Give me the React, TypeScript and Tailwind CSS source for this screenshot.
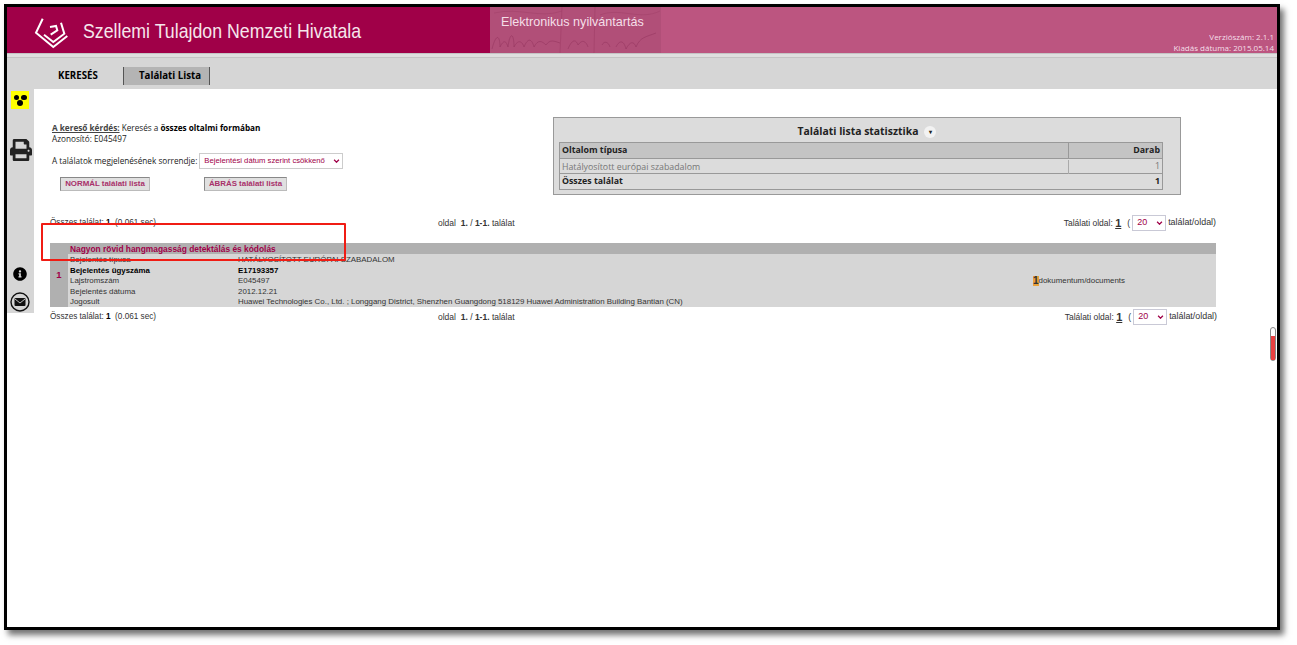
import { FaInfoCircle, FaPrint } from "react-icons/fa";

const sans = "font-['Liberation_Sans',Arial,sans-serif]";
const human = "font-['Open_Sans',sans-serif]";

const fields = [
  { label: "Bejelentés típusa", value: "HATÁLYOSÍTOTT EURÓPAI SZABADALOM" },
  { label: "Bejelentés ügyszáma", value: "E17193357", bold: true },
  { label: "Lajstromszám", value: "E045497" },
  { label: "Bejelentés dátuma", value: "2012.12.21" },
  {
    label: "Jogosult",
    value:
      "Huawei Technologies Co., Ltd. ; Longgang District, Shenzhen Guangdong 518129 Huawei Administration Building Bantian (CN)",
  },
];

function Logo() {
  return (
    <svg viewBox="0 0 34 36" className="h-[36px] w-[34px] overflow-visible" fill="none" stroke="#fff" strokeWidth="2">
      <path d="M7.7 6.7 L1 20.7 L18.3 35 L32.3 24" />
      <path d="M26 10.7 L29.3 21.7 L18.3 30 L9 22.7" />
      <path d="M15 15 L21 14 L22.3 18.3 L15.7 22.7" />
    </svg>
  );
}

function Handwriting() {
  return (
    <svg viewBox="0 0 171 46" className="h-full w-full" fill="none" stroke="#8f2f58" strokeOpacity="0.5">
      <path d="M2 42 C6 26 10 28 10 40 C14 32 16 34 18 40 C20 24 24 26 24 40 C28 32 32 34 34 40 C38 30 42 32 44 40 C48 32 52 34 56 38 C60 32 64 34 70 36" strokeWidth="0.9" />
      <path d="M78 42 C82 32 86 32 88 38 C92 32 96 34 98 40 M112 38 C114 34 118 34 120 40 M126 40 C130 32 134 34 136 42 C140 34 144 34 146 40 C150 30 156 30 166 26" strokeWidth="0.9" />
      <path d="M72 0 L70 46 M105 0 L104 46" strokeWidth="0.6" />
      <path d="M4 6 C30 0 50 12 72 4 M110 8 C130 0 150 14 170 4" strokeWidth="0.5" />
    </svg>
  );
}

function Chevron() {
  return (
    <svg viewBox="0 0 8 5" className="pointer-events-none absolute right-[3px] top-[6px] h-[4px] w-[7px]" fill="none" stroke="#a00048" strokeWidth="1.6">
      <path d="M1 1 L4 4 L7 1" />
    </svg>
  );
}

function Summary({ pager, offset }: Readonly<{ pager: string; offset: string }>) {
  return (
    <div className={`${pager} flex items-center text-[8.5px] text-[#333] ${sans}`}>
      <span className="w-[388px] text-[8.2px]">
        Összes találat: <b className="text-black">1</b>&nbsp;&nbsp;(0.061 sec)
      </span>
      <span className="flex-1">
        oldal&nbsp;&nbsp;<b>1.</b> / <b>1-1.</b> találat
      </span>
      <span className={`flex items-center ${offset}`}>
        Találati oldal:&nbsp;<b className="text-[11px] underline">1</b>
        <span className="ml-[6px]">(</span>
        <span className="relative mx-[2px] h-[16px] w-[34px]">
          <select className="h-full w-full appearance-none border border-[#c9c9d6] bg-white pl-[4px] text-[9px] text-[#a00048]">
            <option>20</option>
          </select>
          <Chevron />
        </span>
        <span className="text-[8.9px]">találat/oldal)</span>
      </span>
    </div>
  );
}

export default function App() {
  return (
    <div className="h-[645px] w-[1297px] bg-white pl-[4px] pt-[4px]">
      <div className="relative h-[626px] w-[1276px] overflow-hidden border-[3px] border-black shadow-[4px_5px_6px_rgba(0,0,0,0.55)]">
        <header className="flex h-[46px] bg-[#a00048] text-white">
          <div className={`flex w-[483px] items-center pl-[28px] ${sans}`}>
            <Logo />
            <span className="ml-[14px] origin-left scale-x-[0.845] whitespace-nowrap text-[21px] leading-none text-[#f6e6ec]">
              Szellemi Tulajdon Nemzeti Hivatala
            </span>
          </div>
          <div className="relative w-[171px] bg-[#b14f78]">
            <Handwriting />
            <span className={`absolute left-[11px] top-[9px] text-[12.6px] leading-none text-[#f5dfe8] ${sans}`}>
              Elektronikus nyilvántartás
            </span>
          </div>
          <div className={`flex flex-1 flex-col items-end justify-end bg-[#bc5580] pr-[3px] text-right text-[8px] leading-[11px] text-[#f5dfe8] ${human}`}>
            <span>Verziószám: 2.1.1</span>
            <span>Kiadás dátuma: 2015.05.14</span>
          </div>
        </header>

        <div className="h-[5px] border-y border-[#c4c4c4] bg-[#dfdfdf]" />

        <nav className={`flex h-[31px] items-end bg-[#d6d6d6] pl-[51px] pb-[4px] text-[9.7px] font-bold text-black ${human}`}>
          <span className="flex h-[18px] w-[65px] items-center">KERESÉS</span>
          <span className="flex h-[18px] w-[87px] items-center border-x border-[#555] bg-[#b4b4b4] pl-[15px]">
            Találati Lista
          </span>
        </nav>

        <div className="flex">
          <aside className="flex h-[224px] w-[27px] flex-col items-center bg-[#d6d6d6] pr-[1px]">
            <div className="mt-[2px] flex h-[18px] w-[18px] flex-col items-center justify-center bg-[#ffff00]">
              <div className="flex gap-[2px]">
                <span className="h-[5.5px] w-[5.5px] rounded-full bg-black" />
                <span className="h-[5.5px] w-[5.5px] rounded-full bg-black" />
              </div>
              <span className="h-[5.5px] w-[5.5px] rounded-full bg-black" />
            </div>
            <FaPrint className="ml-[2px] mt-[29px] h-[24px] w-[22px] text-[#222]" />
            <FaInfoCircle className="mt-[105px] h-[14px] w-[14px] text-black" />
            <svg viewBox="0 0 20 20" className="mt-[11px] h-[20px] w-[20px]">
              <circle cx="10" cy="10" r="9" fill="none" stroke="#111" strokeWidth="1.4" />
              <rect x="4.5" y="6" width="11" height="8" rx="1" fill="#111" />
              <path d="M5 7 L10 11 L15 7" fill="none" stroke="#d6d6d6" strokeWidth="0.9" />
            </svg>
          </aside>

          <main className="flex-1 pl-[16px] pr-[61px]">
            <div className="flex h-[106px] items-start">
              <div className={`w-[503px] pt-[33px] text-[8.2px] text-[#222] ${human}`}>
                <div className="ml-[2px] leading-[12px]">
                  <b className="text-[#444] underline">A kereső kérdés:</b> Keresés a <b className="text-black">összes oltalmi formában</b>
                </div>
                <div className="ml-[2px] leading-[10px]">Azonosító: E045497</div>
                <div className="ml-[2px] mt-[9px] flex items-center">
                  A találatok megjelenésének sorrendje:
                  <span className="relative ml-[2px] h-[16px] w-[144px]">
                    <select className={`h-full w-full appearance-none border border-[#ccc] bg-white pl-[4px] text-[7.7px] text-[#a00048] ${sans}`}>
                      <option>Bejelentési dátum szerint csökkenő</option>
                    </select>
                    <Chevron />
                  </span>
                </div>
                <div className={`ml-[10px] mt-[8px] flex text-[7.9px] font-bold text-[#a8306a] ${sans}`}>
                  <button className="h-[14px] w-[90px] border border-[#bbb] border-t-[#888] border-l-[#888] bg-[#e0e0e0]">
                    NORMÁL találati lista
                  </button>
                  <button className="ml-[54px] h-[14px] w-[83px] border border-[#bbb] border-t-[#888] border-l-[#888] bg-[#e0e0e0]">
                    ÁBRÁS találati lista
                  </button>
                </div>
              </div>

              <section className={`mt-[28px] h-[78px] w-[628px] border border-[#999] bg-[#dcdcdc] px-[5px] ${human}`}>
                <h2 className="flex h-[24px] items-center justify-center gap-[6px] pt-[3px] text-[10.4px] font-bold text-[#222]">
                  Találati lista statisztika
                  <span className="flex h-[12px] w-[12px] items-center justify-center rounded-full bg-[#f2f2f2] text-[6px] leading-none text-[#222]">
                    ▾
                  </span>
                </h2>
                <div className="w-[604px] border border-[#999] text-[8.8px]">
                  <div className="flex h-[16px] items-center border-b border-[#999] bg-[#c4c4c4] font-bold text-[#222]">
                    <span className="w-[509px] border-r border-[#999] pl-[2px] leading-[15px]">Oltalom típusa</span>
                    <span className="flex-1 pr-[2px] text-right">Darab</span>
                  </div>
                  <div className="flex h-[15px] items-center border-b border-[#999] pt-[1px] text-[#777]">
                    <span className="w-[509px] border-r border-[#aaa] pl-[2px] leading-[14px]">Hatályosított európai szabadalom</span>
                    <span className="flex-1 pr-[2px] text-right">1</span>
                  </div>
                  <div className="flex h-[15px] items-center justify-between px-[2px] font-bold text-[#222]">
                    <span>Összes találat</span>
                    <span>1</span>
                  </div>
                </div>
              </section>
            </div>

            <Summary pager="mt-[20px] h-[16px]" offset="" />

            <div className={`mt-[12px] flex h-[64px] bg-[#d6d6d6] text-[7.9px] text-[#333] ${sans}`}>
              <div className="flex w-[18px] items-center justify-center bg-[#b0b0b0] text-[9.5px] font-bold text-[#a00048]">1</div>
              <div className="flex-1">
                <div className="h-[11px] bg-[#b0b0b0] pl-[2px] text-[8.4px] font-bold leading-[12px] text-[#a00048]">
                  Nagyon rövid hangmagasság detektálás és kódolás
                </div>
                <div className="flex">
                  <div className="w-[965px] pt-[1px]">
                    {fields.map((field) => (
                      <div key={field.label} className={`flex h-[10.5px] items-center pl-[2px] ${field.bold ? "font-bold text-black" : ""}`}>
                        <span className="w-[168px]">{field.label}</span>
                        <span className="whitespace-nowrap">{field.value}</span>
                      </div>
                    ))}
                  </div>
                  <div className="flex h-[53px] items-center">
                    <b className="bg-[#e9a13b] text-[10px] leading-[10px] text-[#333]">1</b>dokumentum/documents
                  </div>
                </div>
              </div>
            </div>

            <Summary pager="mt-[2px] h-[16px]" offset="-mr-[1px]" />
          </main>
        </div>

        {/* piros kiemelés a képernyőképen */}
        <div className="absolute left-[34px] top-[216px] h-[38px] w-[305px] rounded-[1px] border-2 border-[#f01c14]" />

        <div className="absolute left-[1263px] top-[320px] h-[34px] w-[6px] rounded-[3px] border border-[#888] bg-white pt-[8px]">
          <div className="h-full w-full bg-[#e84040]" />
        </div>
      </div>
    </div>
  );
}
